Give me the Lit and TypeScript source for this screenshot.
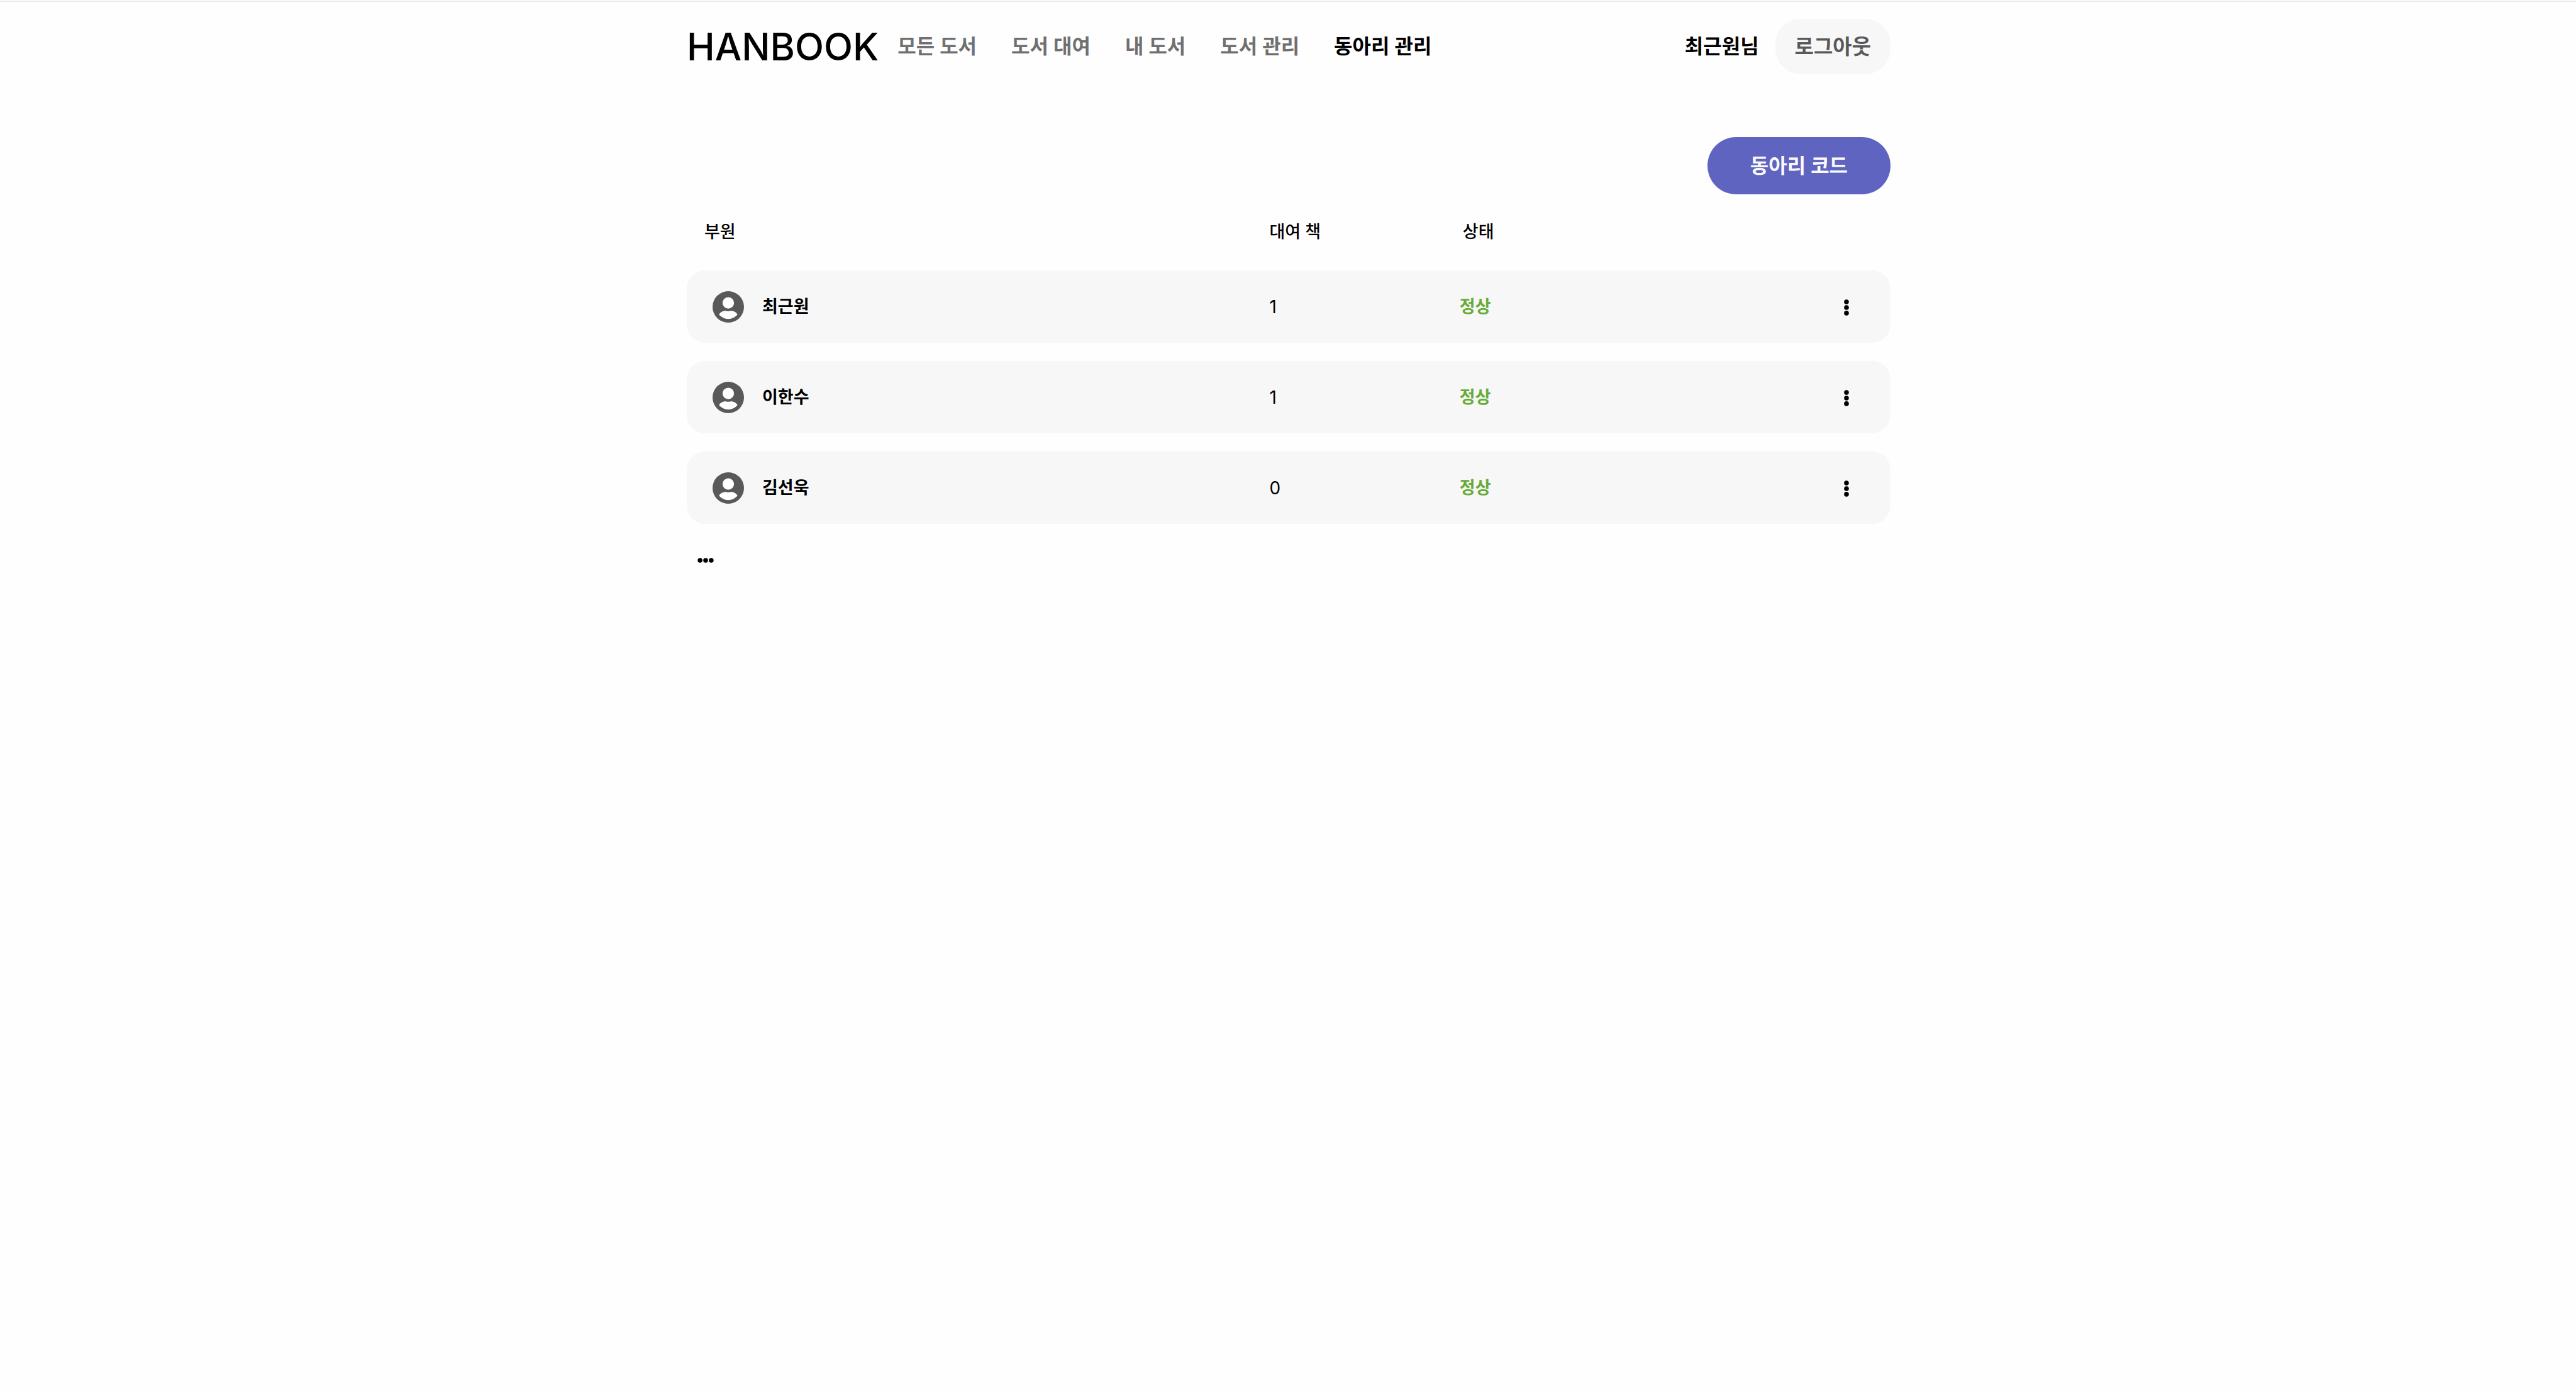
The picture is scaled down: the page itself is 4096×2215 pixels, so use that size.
import { LitElement, html, css, svg } from "lit";
import { customElement, property } from "lit/decorators.js";

interface Member {
  name: string;
  rented: number;
  status: string;
}

const MEMBERS: Member[] = [
  { name: "최근원", rented: 1, status: "정상" },
  { name: "이한수", rented: 1, status: "정상" },
  { name: "김선욱", rented: 0, status: "정상" },
];

const NAV = ["모든 도서", "도서 대여", "내 도서", "도서 관리", "동아리 관리"];
const ACTIVE = "동아리 관리";

@customElement("dots-icon")
export class DotsIcon extends LitElement {
  @property({ type: Boolean }) vertical = false;

  static styles = css`
    :host {
      display: block;
      width: 28px;
      height: 28px;
    }
    .icon {
      display: block;
      width: 100%;
      height: 100%;
    }
  `;

  render() {
    const dots = [5.1, 14, 22.9].map((p) =>
      this.vertical
        ? svg`<circle cx="14" cy=${p} r="3.8" />`
        : svg`<circle cx=${p} cy="14" r="3.8" />`
    );
    return html`<svg class="icon" viewBox="0 0 28 28" fill="#000" aria-hidden="true">${dots}</svg>`;
  }
}

@customElement("site-header")
export class SiteHeader extends LitElement {
  static styles = css`
    :host {
      display: block;
      padding-top: 1px;
    }
    .rule {
      border-top: 2px solid #eaeaea;
    }
    .bar {
      display: flex;
      align-items: center;
      margin: 0 26.61% 0 26.66%;
      padding-top: 27px;
    }
    .logo {
      color: #000;
      text-decoration: none;
      font-size: 60px;
      line-height: 72px;
      font-weight: 500;
      margin-right: 30px;
    }
    .nav {
      display: flex;
      gap: 55px;
      flex: 1;
    }
    .link {
      color: #707070;
      text-decoration: none;
      font-size: 32px;
      line-height: 40px;
      font-weight: 600;
    }
    .link.active {
      color: #000;
    }
    .user {
      font-size: 32px;
      line-height: 40px;
      font-weight: 600;
      margin-right: 26px;
    }
    .logout {
      font: inherit;
      font-size: 33px;
      line-height: 40px;
      font-weight: 600;
      color: #595959;
      background: #f7f7f7;
      border: 0;
      border-radius: 40px;
      padding: 24px 31px;
    }
  `;

  render() {
    return html`
      <div class="rule"></div>
      <header class="bar">
        <a class="logo" href="#">HANBOOK</a>
        <nav class="nav">
          ${NAV.map(
            (n) => html`<a class="link ${n === ACTIVE ? "active" : ""}" href="#">${n}</a>`
          )}
        </nav>
        <span class="user">최근원님</span>
        <button class="logout" type="button">로그아웃</button>
      </header>
    `;
  }
}

@customElement("member-table")
export class MemberTable extends LitElement {
  static styles = css`
    :host {
      display: block;
    }
    .table {
      width: 100%;
      table-layout: fixed;
      border-collapse: separate;
      border-spacing: 0 29px;
      font-size: 27px;
      line-height: 32px;
    }
    .col-name {
      width: 48.4%;
    }
    .col-books {
      width: 15.8%;
    }
    .col-menu {
      width: 112px;
    }
    th {
      padding: 0 0 16px;
      text-align: left;
      font-weight: 500;
    }
    .head-name {
      padding-left: 28px;
    }
    .head-status {
      padding-left: 5px;
    }
    .cell {
      height: 115px;
      padding: 0;
      background: #f7f7f7;
      font-weight: 500;
    }
    .cell:first-child {
      border-radius: 29px 0 0 29px;
    }
    .cell:last-child {
      border-radius: 0 29px 29px 0;
    }
    .count {
      font-size: 28px;
      font-weight: 400;
    }
    .person {
      display: flex;
      align-items: center;
      gap: 29px;
      padding-left: 41px;
      font-weight: 600;
    }
    .avatar {
      width: 50px;
      height: 50px;
    }
    .status {
      color: #67ab3a;
      font-weight: 600;
    }
    .menu {
      display: block;
      padding: 0;
      border: 0;
      background: none;
      margin: 2px 0 0 28px;
    }
  `;

  render() {
    return html`
      <table class="table">
        <colgroup>
          <col class="col-name" />
          <col class="col-books" />
          <col />
          <col class="col-menu" />
        </colgroup>
        <thead>
          <tr>
            <th class="head-name" scope="col">부원</th>
            <th scope="col">대여 책</th>
            <th class="head-status" scope="col">상태</th>
            <td></td>
          </tr>
        </thead>
        <tbody>
          ${MEMBERS.map(
            (m) => html`
              <tr>
                <td class="cell">
                  <div class="person">
                    <svg class="avatar" viewBox="0 0 189 189" aria-hidden="true">
                      <circle cx="94.5" cy="94.5" r="94.5" fill="#595959" />
                      <circle cx="94.5" cy="70.5" r="34.5" fill="#fff" />
                      <path
                        fill="#fff"
                        d="M39 141C46 126 62 117 80 118C90 121 99 121 109 118C127 117 143 126 150 141C136 157 116 167 94.5 167C73 167 53 157 39 141Z"
                      />
                    </svg>
                    <span>${m.name}</span>
                  </div>
                </td>
                <td class="cell count">${m.rented}</td>
                <td class="cell"><span class="status">${m.status}</span></td>
                <td class="cell">
                  <button class="menu" type="button" aria-label=${m.name}>
                    <dots-icon vertical></dots-icon>
                  </button>
                </td>
              </tr>
            `
          )}
        </tbody>
      </table>
    `;
  }
}

@customElement("app-root")
export class AppRoot extends LitElement {
  static styles = css`
    :host {
      display: block;
      min-height: 100vh;
      background: #fefefe;
      color: #000;
      font-family: Inter, "Noto Sans CJK KR", sans-serif;
    }
    .page {
      margin: 0 26.61% 0 26.66%;
      padding-top: 100px;
    }
    .actions {
      display: flex;
      justify-content: flex-end;
      margin-bottom: 15px;
    }
    .code {
      font: inherit;
      font-size: 32px;
      line-height: 40px;
      font-weight: 600;
      color: #fafafa;
      background: #5f64c0;
      border: 0;
      border-radius: 46px;
      padding: 26px 68px 25px;
    }
    .more {
      display: block;
      padding: 0;
      border: 0;
      background: none;
      margin: 15px 0 0 16px;
    }
  `;

  render() {
    return html`
      <site-header></site-header>
      <main class="page">
        <div class="actions">
          <button class="code" type="button">동아리 코드</button>
        </div>
        <member-table></member-table>
        <button class="more" type="button" aria-label="더 보기">
          <dots-icon></dots-icon>
        </button>
      </main>
    `;
  }
}
